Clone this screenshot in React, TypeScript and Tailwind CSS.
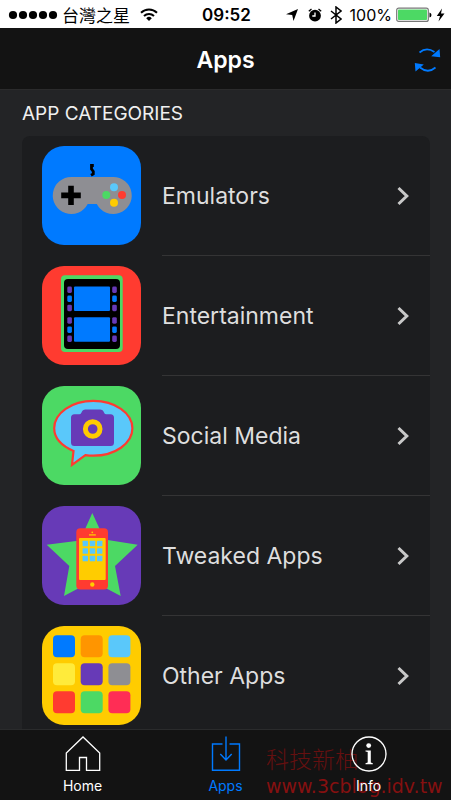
import React from 'react';

interface Category {
  name: string;
  icon: React.ReactNode;
}

const FILM_HOLES = [
  { y: 20.5, fill: '#673ab7' },
  { y: 29.5, fill: '#007aff' },
  { y: 38.7, fill: '#673ab7' },
  { y: 51.2, fill: '#673ab7' },
  { y: 60.4, fill: '#007aff' },
  { y: 69.5, fill: '#673ab7' },
];

const TILE_COLORS = [
  '#007aff', '#ff9500', '#5ac8fa',
  '#ffeb3b', '#673ab7', '#8e8e93',
  '#ff3b30', '#4cd964', '#ff2d55',
];

const CategoryIcon: React.FC<{ color: string; children: React.ReactNode }> = ({ color, children }) => (
  <svg viewBox="0 0 99 99" className="size-[99px] shrink-0" aria-hidden="true">
    <rect width="99" height="99" rx="22" fill={color} />
    {children}
  </svg>
);

const EmulatorsIcon = () => (
  <CategoryIcon color="#007aff">
    <path d="M51.8 19.5H49.5V23L51.3 25.5V28L49 29.3" fill="none" stroke="#000" strokeWidth="2.8" />
    <path
      d="M29.5 31H71a18.5 18.5 0 1 1-16.2 27H45.7A18.5 18.5 0 1 1 29.5 31Z"
      fill="#8e8e93"
    />
    <path d="M26.2 39.8h5.6v6.7h7v5.8h-7V59h-5.6v-6.7h-7v-5.8h7Z" fill="#000" />
    <circle cx="72" cy="41.3" r="4" fill="#5ac8fa" />
    <circle cx="80" cy="49" r="4" fill="#ff3b30" />
    <circle cx="64.3" cy="49" r="4" fill="#4cd964" />
    <circle cx="72" cy="56.7" r="4" fill="#ffcc00" />
  </CategoryIcon>
);

const EntertainmentIcon = () => (
  <CategoryIcon color="#ff3b30">
    <rect x="19" y="9.2" width="61.7" height="76.8" rx="4" fill="#4cd964" />
    <rect x="22" y="13" width="56" height="70" rx="4" fill="#000" />
    <rect x="32" y="20.5" width="36" height="24.5" rx="1" fill="#007aff" />
    <rect x="32" y="51.3" width="36" height="24.5" rx="1" fill="#007aff" />
    {FILM_HOLES.map((hole) => (
      <React.Fragment key={hole.y}>
        <rect x="25.3" y={hole.y} width="4.6" height="6.5" rx="1.4" fill={hole.fill} />
        <rect x="70.2" y={hole.y} width="4.6" height="6.5" rx="1.4" fill={hole.fill} />
      </React.Fragment>
    ))}
  </CategoryIcon>
);

const SocialIcon = () => (
  <CategoryIcon color="#4cd964">
    <path
      d="M31.5 65C20 60 12.2 52.5 12.2 42.3C12.2 27 29.7 14.9 51.3 14.9S90.4 27 90.4 42.3S72.9 69.7 51.3 69.7Q47.2 69.7 43.4 69.1L30 78.8Z"
      fill="#5ac8fa"
      stroke="#ff3b30"
      strokeWidth="2.2"
    />
    <path
      d="M32.5 28.3H37.5Q39 28.3 39.5 26.5Q40.5 23.4 43.5 23.4H58Q61 23.4 62 26.5Q62.5 28.3 64 28.3H68.5Q72 28.3 72 31.8V56.5Q72 60 68.5 60H32.5Q29 60 29 56.5V31.8Q29 28.3 32.5 28.3Z"
      fill="#673ab7"
    />
    <circle cx="50.7" cy="43" r="7.3" fill="none" stroke="#ffcc00" strokeWidth="5" />
  </CategoryIcon>
);

const TweakedIcon = () => (
  <CategoryIcon color="#673ab7">
    <path
      d="M50.3 7L62.5 33.5L95.7 38.7L73 60L78.7 90L50.3 75L22 90L27.3 60L4.7 38.7L38 34.5Z"
      fill="#4cd964"
    />
    <rect x="34.3" y="22.3" width="31.7" height="61.3" rx="4" fill="#ff3b30" />
    <rect x="37" y="32" width="26.7" height="42" rx="1" fill="#ffcc00" />
    <circle cx="50.3" cy="26.3" r="0.9" fill="#ffcc00" />
    <path d="M47 28.9h6.8" stroke="#ffcc00" strokeWidth="1.3" />
    <circle cx="50.3" cy="78.5" r="2.2" fill="#ffcc00" />
    {TILE_COLORS.map((color, i) => (
      <rect
        key={color}
        x={40.6 + (i % 3) * 7.2}
        y={34.7 + Math.floor(i / 3) * 7.5}
        width="5.4"
        height="5.6"
        rx="0.6"
        fill="#5ac8fa"
      />
    ))}
  </CategoryIcon>
);

const OtherIcon = () => (
  <CategoryIcon color="#ffcc00">
    {TILE_COLORS.map((color, i) => (
      <rect
        key={color}
        x={11 + (i % 3) * 27.7}
        y={9.3 + Math.floor(i / 3) * 28}
        width="22"
        height="22"
        rx="4"
        fill={color}
      />
    ))}
  </CategoryIcon>
);

const CATEGORIES: Category[] = [
  { name: 'Emulators',     icon: <EmulatorsIcon /> },
  { name: 'Entertainment', icon: <EntertainmentIcon /> },
  { name: 'Social Media',  icon: <SocialIcon /> },
  { name: 'Tweaked Apps',  icon: <TweakedIcon /> },
  { name: 'Other Apps',    icon: <OtherIcon /> },
];

const StatusBar = () => (
  <div className="flex h-7 shrink-0 items-center bg-white pt-0.5 pr-1.5 pl-2 text-black">
    <div className="flex flex-1 items-center gap-1">
      <svg viewBox="0 0 50 10" className="h-2.5 w-[50px]" aria-hidden="true">
        {[5, 15, 25, 35, 45].map((cx) => <circle key={cx} cx={cx} cy="5" r="4.1" />)}
      </svg>
      <span className="font-['Noto_Sans_CJK_TC',sans-serif] text-[17px] leading-6">台灣之星</span>
      <svg viewBox="0 0 18 14" className="ml-1.5 h-3.5 w-[18px]" fill="none" stroke="#000" aria-hidden="true">
        <path d="M1 4.8A11.5 11.5 0 0 1 17 4.8" strokeWidth="2" />
        <path d="M4 8A7.2 7.2 0 0 1 14 8" strokeWidth="2" />
        <path d="M9 13L6.2 10.2A4 4 0 0 1 11.8 10.2Z" fill="#000" stroke="none" />
      </svg>
    </div>
    <span className="text-[17px] leading-6 font-semibold">09:52</span>
    <div className="flex flex-1 items-center justify-end">
      <svg viewBox="0 0 12 12" className="mr-2.5 size-3" aria-hidden="true">
        <path d="M12 0L7.5 12L6.2 6L0 5.2Z" />
      </svg>
      <svg viewBox="0 0 14 14" className="mr-2 size-3.5" aria-hidden="true">
        <circle cx="7" cy="7.7" r="5.9" />
        <path d="M0.8 3.2L3.5 1M13.2 3.2L10.5 1" stroke="#000" strokeWidth="1.3" />
        <path d="M7 4.5V8H4.3" fill="none" stroke="#fff" strokeWidth="1.3" />
      </svg>
      <svg viewBox="0 0 12 18" className="mr-2 h-[18px] w-3" fill="none" stroke="#000" strokeWidth="1.5" aria-hidden="true">
        <path d="M1 5L11 13L6 17V1L11 5L1 13" />
      </svg>
      <span className="mr-1 text-[16px] leading-6">100%</span>
      <svg viewBox="0 0 36 16" className="mr-1 h-4 w-9" aria-hidden="true">
        <rect x="0.7" y="1.2" width="31.6" height="13.2" rx="2" fill="#fff" stroke="#777" strokeWidth="1.2" />
        <rect x="2" y="2.5" width="29" height="10.6" rx="0.8" fill="#4cd964" />
        <path d="M33.5 5.5Q35.5 6 35.5 8T33.5 10.5Z" />
      </svg>
      <svg viewBox="0 0 9 14" className="h-3.5 w-[9px]" aria-hidden="true">
        <path d="M6 0.5L0.8 8H4L2.5 13.5L8.5 5.5H5Z" />
      </svg>
    </div>
  </div>
);

const Header = () => (
  <header className="relative flex h-[62px] shrink-0 items-center justify-center border-b border-[#2b2b2c] bg-[#131313] pt-0.5">
    <h1 className="text-[23px] leading-7 font-semibold text-white">Apps</h1>
    <button type="button" aria-label="Refresh" className="absolute right-2.5 text-[#007aff]">
      <svg viewBox="0 0 27 26" className="h-[26px] w-[27px]" aria-hidden="true">
        <path d="M5.5 5.5Q12.5-0.5 20.5 5M21.5 20.5Q14 27 6 20.5" fill="none" stroke="currentColor" strokeWidth="1.7" />
        <path d="M25.5 2L26.2 10.3L17.2 9.3ZM0.8 16L9.8 17.5L1.5 24.5Z" fill="currentColor" />
      </svg>
    </button>
  </header>
);

const CategoryRow: React.FC<{ category: Category }> = ({ category }) => (
  <li className="pl-5">
    <a href="#" className="flex h-[120px] gap-[21px]">
      <div className="flex items-start pt-2.5">{category.icon}</div>
      <div className="flex flex-1 items-center justify-between border-b border-[#343435] pr-5">
        <span className="text-[23px] leading-8 text-[#dedede]">{category.name}</span>
        <svg viewBox="0 0 14 20" className="h-5 w-3.5" aria-hidden="true">
          <path d="M2.5 2L10.8 10L2.5 18" fill="none" stroke="#c8c8c8" strokeWidth="3" />
        </svg>
      </div>
    </a>
  </li>
);

const TabBar = () => (
  <nav className="relative isolate flex h-[71px] shrink-0 justify-around border-t border-[#2a2b2c] bg-[#131313] px-[11px] pt-1.5 text-[14px] leading-5 text-white">
    <a href="#" className="flex flex-1 flex-col items-center gap-1">
      <svg viewBox="0 0 36 36" className="size-9" fill="none" stroke="currentColor" strokeWidth="1.3" aria-hidden="true">
        <path d="M1.3 34.3V17L18 1L34.7 17V34.3H21.5V21.5H14.5V34.3Z" />
      </svg>
      Home
    </a>
    <a href="#" aria-current="page" className="flex flex-1 flex-col items-center gap-1 text-[#007aff]">
      <svg viewBox="0 0 36 36" className="size-9" fill="none" stroke="currentColor" strokeWidth="1.4" aria-hidden="true">
        <path d="M14.5 8H4.5V34.3H31.5V8H21.5M18 0.5V24M12.3 18L18 24L23.7 18" />
      </svg>
      Apps
    </a>
    <a href="#" className="flex flex-1 flex-col items-center gap-1">
      <svg viewBox="0 0 36 36" className="size-9" aria-hidden="true">
        <circle cx="18" cy="18" r="17" fill="none" stroke="currentColor" strokeWidth="1.4" />
        <circle cx="17.7" cy="9.6" r="2.4" fill="currentColor" />
        <path d="M14.5 14.5H19.8V26.6L21.8 27.3V28.3H14.5V27.3L16.7 26.6V16L14.5 15.4Z" fill="currentColor" />
      </svg>
      Info
    </a>
    <div className="pointer-events-none absolute right-1 bottom-0 -z-10 flex w-[181px] flex-col">
      <span className="font-['Noto_Sans_CJK_TC',sans-serif] text-[23px] leading-7 font-light text-[#651010]">科技新柚</span>
      <span className="font-['DejaVu_Sans',sans-serif] text-[19px] leading-7 text-[#851010]">www.3cblog.idv.tw</span>
    </div>
  </nav>
);

export default function App() {
  return (
    <div className="flex h-screen flex-col bg-[#232426] font-['Inter',sans-serif]">
      <StatusBar />
      <Header />
      <main className="min-h-0 flex-1 overflow-y-auto pr-[21px] pl-[22px] [scrollbar-width:none]">
        <h2 className="pt-3 pb-2.5 text-[19px] leading-6 text-[#f0f0f0]">APP CATEGORIES</h2>
        <ul className="rounded-t-lg bg-[#1c1d1f]">
          {CATEGORIES.map((category) => (
            <CategoryRow key={category.name} category={category} />
          ))}
        </ul>
      </main>
      <TabBar />
    </div>
  );
}
